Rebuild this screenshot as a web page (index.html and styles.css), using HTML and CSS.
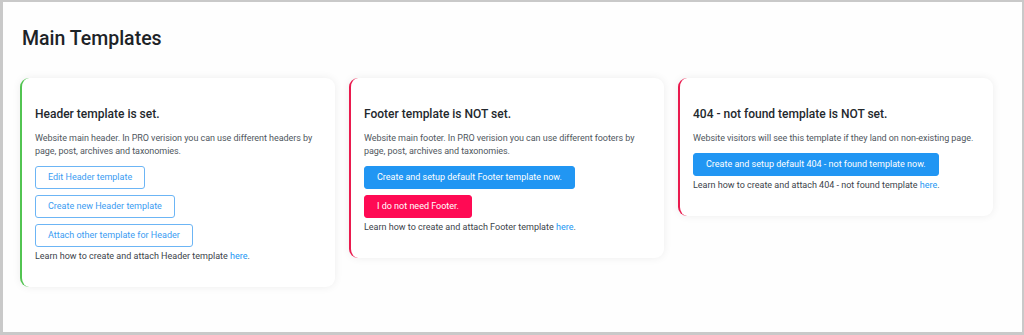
FILE: index.html
```html
<!DOCTYPE html>
<html lang="en">
<head>
<meta charset="utf-8">
<title>Main Templates</title>
<link rel="stylesheet" href="styles.css">
</head>
<body>
<div class="frame">
  <h1 class="title">Main Templates</h1>
  <div class="cards">
    <section class="card card-ok">
      <h2 class="card-title">Header template is set.</h2>
      <p class="card-desc">Website main header. In PRO verision you can use different headers by page, post, archives and taxonomies.</p>
      <div class="actions">
        <a class="btn btn-outline" href="#">Edit Header template</a>
        <a class="btn btn-outline" href="#">Create new Header template</a>
        <a class="btn btn-outline" href="#">Attach other template for Header</a>
      </div>
      <p class="card-learn">Learn how to create and attach Header template <a href="#">here</a>.</p>
    </section>
    <section class="card card-bad">
      <h2 class="card-title">Footer template is NOT set.</h2>
      <p class="card-desc">Website main footer. In PRO verision you can use different footers by page, post, archives and taxonomies.</p>
      <div class="actions">
        <a class="btn btn-primary" href="#">Create and setup default Footer template now.</a>
        <a class="btn btn-danger" href="#">I do not need Footer.</a>
      </div>
      <p class="card-learn">Learn how to create and attach Footer template <a href="#">here</a>.</p>
    </section>
    <section class="card card-bad">
      <h2 class="card-title">404 - not found template is NOT set.</h2>
      <p class="card-desc">Website visitors will see this template if they land on non-existing page.</p>
      <div class="actions">
        <a class="btn btn-primary" href="#">Create and setup default 404 - not found template now.</a>
      </div>
      <p class="card-learn">Learn how to create and attach 404 - not found template <a href="#">here</a>.</p>
    </section>
  </div>
</div>
</body>
</html>
```
FILE: styles.css
```css
* { box-sizing: border-box; }
html, body { margin: 0; padding: 0; }
body {
  font-family: Roboto, "Noto Sans", sans-serif;
  color: #32373c;
  background: #fff;
}
.frame {
  width: 1024px;
  height: 335px;
  border-style: solid;
  border-color: #c9c9c9;
  border-width: 2px 2px 3px 3px;
  background: #fefefe;
  padding: 24px 17px 0 17px;
}
.title {
  margin: 0 0 0 2px;
  font-size: 19.5px;
  line-height: 26px;
  font-weight: 500;
  color: #1d2327;
}
.cards {
  display: flex;
  align-items: flex-start;
  gap: 14px;
  margin-top: 26px;
}
.card {
  width: 315px;
  background: #fff;
  border-radius: 9px;
  border-left: 2px solid #e0e0e0;
  box-shadow: 0 0 9px rgba(0, 0, 0, 0.07);
  padding: 27px 13px 24px 13px;
}
.card-ok { border-left-color: #52c451; }
.card-bad { border-left-color: #ea1a4e; }
.card-title {
  margin: 0;
  font-size: 12px;
  line-height: 18px;
  font-weight: 500;
  color: #23282d;
}
.card-desc {
  margin: 9px 0 0 0;
  font-size: 9px;
  line-height: 13px;
  letter-spacing: -0.05px;
  color: #50575e;
}
.actions {
  display: flex;
  flex-direction: column;
  align-items: flex-start;
  gap: 6px;
  margin-top: 8px;
}
.btn {
  display: inline-block;
  height: 23px;
  line-height: 21px;
  padding: 0 12px;
  font-size: 9px;
  border-radius: 3px;
  text-decoration: none;
  border: 1px solid transparent;
  white-space: nowrap;
}
.btn-outline {
  color: #3b9cf2;
  border-color: #6cb5f5;
  background: #fff;
}
.btn-primary {
  color: #fff;
  background: #2196f3;
  border-color: #2196f3;
}
.btn-danger {
  color: #fff;
  background: #ff0a54;
  border-color: #ff0a54;
}
.card-learn {
  margin: 3px 0 0 0;
  font-size: 9px;
  line-height: 13px;
  color: #3c434a;
}
.card-learn a {
  color: #2196f3;
  text-decoration: none;
}
```
